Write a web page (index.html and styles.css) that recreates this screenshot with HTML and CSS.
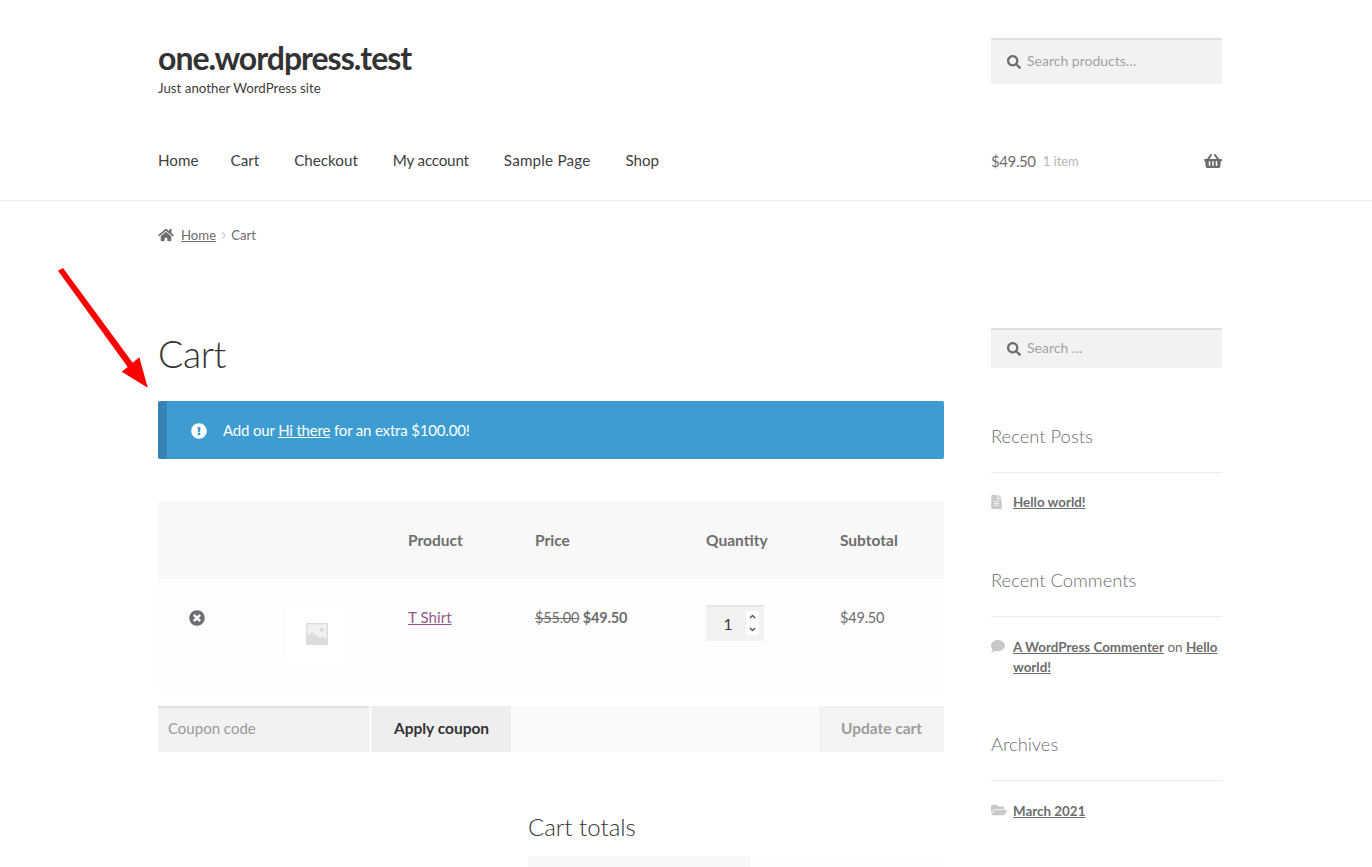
FILE: index.html
```html
<!DOCTYPE html>
<html lang="en">
<head>
<meta charset="utf-8">
<title>Cart – one.wordpress.test</title>
<link rel="stylesheet" href="styles.css">
</head>
<body>
<svg class="arrow" viewBox="0 0 90 120" width="90" height="120" aria-hidden="true"><path d="M0 2.800 L5 0 L74.700 94.700 L81.300 89.300 L89.800 119.800 L63.700 103.700 L69.700 99 Z" fill="#fe0000"/></svg>
<header class="site-header">
  <div class="wrap header-top">
    <div class="brand">
      <div class="site-title">one.wordpress.test</div>
      <div class="tagline">Just another WordPress site</div>
    </div>
    <form class="search header-search">
      <svg class="ico search-ico" viewBox="0 0 512 512"><path d="M505 442.700L405.300 343c-4.500-4.500-10.600-7-17-7H372c27.600-35.300 44-79.700 44-128C416 93.100 322.900 0 208 0S0 93.100 0 208s93.100 208 208 208c48.300 0 92.700-16.400 128-44v16.300c0 6.400 2.500 12.500 7 17l99.700 99.700c9.400 9.400 24.600 9.400 33.900 0l28.300-28.300c9.400-9.400 9.400-24.600.1-34zM208 336c-70.700 0-128-57.200-128-128 0-70.700 57.200-128 128-128 70.700 0 128 57.200 128 128 0 70.700-57.200 128-128 128z"/></svg>
      <input class="search-input" type="text" placeholder="Search products…">
    </form>
  </div>
  <div class="wrap header-nav">
    <nav class="menu">
      <a href="#">Home</a><a href="#">Cart</a><a href="#">Checkout</a><a href="#">My account</a><a href="#">Sample Page</a><a href="#">Shop</a>
    </nav>
    <div class="mini-cart">
      <span class="mini-amount">$49.50</span><span class="mini-count">1 item</span>
      <svg class="ico basket" viewBox="0 0 576 512"><path d="M576 216v16c0 13.255-10.745 24-24 24h-8l-26.113 182.788C514.509 462.435 494.257 480 470.370 480H105.630c-23.887 0-44.139-17.565-47.518-41.212L32 256h-8c-13.255 0-24-10.745-24-24v-16c0-13.255 10.745-24 24-24h67.341l106.780-146.821c10.395-14.292 30.407-17.453 44.701-7.058 14.293 10.395 17.453 30.408 7.058 44.701L170.477 192h235.046L326.120 82.821c-10.395-14.292-7.234-34.306 7.059-44.701 14.291-10.395 34.306-7.235 44.701 7.058L484.659 192H552c13.255 0 24 10.745 24 24zM312 392V280c0-13.255-10.745-24-24-24s-24 10.745-24 24v112c0 13.255 10.745 24 24 24s24-10.745 24-24zm112 0V280c0-13.255-10.745-24-24-24s-24 10.745-24 24v112c0 13.255 10.745 24 24 24s24-10.745 24-24zm-224 0V280c0-13.255-10.745-24-24-24s-24 10.745-24 24v112c0 13.255 10.745 24 24 24s24-10.745 24-24z"/></svg>
    </div>
  </div>
</header>

<div class="wrap breadcrumb">
  <svg class="ico home-ico" viewBox="0 0 576 512"><path d="M280.370 148.260L96 300.110V464a16 16 0 0 0 16 16l112.060-.29a16 16 0 0 0 15.920-16V368a16 16 0 0 1 16-16h64a16 16 0 0 1 16 16v95.640a16 16 0 0 0 16 16.050L464 480a16 16 0 0 0 16-16V300L295.670 148.260a12.190 12.190 0 0 0-15.300 0zM571.600 251.470L488 182.560V44.050a12 12 0 0 0-12-12h-56a12 12 0 0 0-12 12v72.610L318.470 43a48 48 0 0 0-61 0L4.340 251.470a12 12 0 0 0-1.600 16.900l25.500 31A12 12 0 0 0 45.150 301l235.220-193.740a12.190 12.190 0 0 1 15.300 0L530.900 301a12 12 0 0 0 16.900-1.600l25.500-31a12 12 0 0 0-1.700-16.930z"/></svg>
  <a href="#">Home</a>
  <svg class="crumb-sep" viewBox="0 0 6 10"><path d="M1 1l4 4-4 4" fill="none" stroke="#d6d6d6" stroke-width="1.800"/></svg>
  <span>Cart</span>
</div>

<div class="wrap columns">
  <main class="content">
    <h1 class="page-title">Cart</h1>
    <div class="notice">
      <svg class="ico notice-ico" viewBox="0 0 512 512"><path d="M504 256c0 136.997-111.043 248-248 248S8 392.997 8 256C8 119.083 119.043 8 256 8s248 111.083 248 248zm-248 50c-25.405 0-46 20.595-46 46s20.595 46 46 46 46-20.595 46-46-20.595-46-46-46zm-43.673-165.346l7.418 136c.347 6.364 5.609 11.346 11.982 11.346h48.546c6.373 0 11.635-4.982 11.982-11.346l7.418-136c.375-6.874-5.098-12.654-11.982-12.654h-63.383c-6.884 0-12.356 5.780-11.981 12.654z"/></svg>
      <span>Add our <a href="#">Hi there</a> for an extra $100.00!</span>
    </div>

    <table class="cart">
      <colgroup><col class="c-remove"><col class="c-thumb"><col class="c-name"><col class="c-price"><col class="c-qty"><col class="c-sub"></colgroup>
      <thead>
        <tr><th></th><th></th><th>Product</th><th>Price</th><th>Quantity</th><th>Subtotal</th></tr>
      </thead>
      <tbody>
        <tr>
          <td class="first"><svg class="ico remove-ico" viewBox="0 0 512 512"><path d="M256 8C119 8 8 119 8 256s111 248 248 248 248-111 248-248S393 8 256 8zm121.600 313.100c4.700 4.700 4.700 12.300 0 17L338 377.600c-4.700 4.700-12.300 4.700-17 0L256 312l-65.100 65.600c-4.700 4.700-12.300 4.700-17 0L134.400 338c-4.700-4.700-4.700-12.300 0-17l65.600-65-65.600-65.100c-4.700-4.700-4.700-12.300 0-17l39.600-39.600c4.700-4.700 12.300-4.700 17 0l65 65.700 65.100-65.600c4.700-4.700 12.300-4.700 17 0l39.600 39.600c4.700 4.700 4.700 12.300 0 17L312 256l65.600 65.100z"/></svg></td>
          <td>
            <div class="thumb"><svg viewBox="0 0 22 22" width="22" height="22"><rect width="22" height="22" fill="#dcdcde"/><path d="M1.500 1.500H20.500V16L16.700 13.300 14 15 5.700 8.700 1.500 13Z" fill="#f1f1f2"/><circle cx="15.700" cy="7" r="2.400" fill="#dcdcde"/></svg></div>
          </td>
          <td><a class="prod" href="#">T Shirt</a></td>
          <td class="money"><del>$55.00</del> <ins>$49.50</ins></td>
          <td>
            <div class="qty-box">
              <input class="qty" type="number" value="1" min="0" step="1">
              <span class="spin" aria-hidden="true">
                <svg viewBox="0 0 13 12" width="13" height="12"><rect width="13" height="12" rx="3" fill="#fff"/><path d="M4 7l2.500-2.500L9 7" fill="none" stroke="#555" stroke-width="1.400"/></svg>
                <svg viewBox="0 0 13 12" width="13" height="12"><rect width="13" height="12" rx="3" fill="#fff"/><path d="M4 5l2.500 2.500L9 5" fill="none" stroke="#555" stroke-width="1.400"/></svg>
              </span>
            </div>
          </td>
          <td class="money">$49.50</td>
        </tr>
      </tbody>
    </table>

    <div class="actions">
      <input class="coupon" type="text" placeholder="Coupon code">
      <button class="btn apply" type="button">Apply coupon</button>
      <button class="btn update" type="button">Update cart</button>
    </div>

    <section class="totals">
      <h2>Cart totals</h2>
      <div class="totals-table"><div class="tt-label"></div><div class="tt-value"></div></div>
    </section>
  </main>

  <aside class="sidebar">
    <form class="search side-search">
      <svg class="ico search-ico" viewBox="0 0 512 512"><path d="M505 442.700L405.300 343c-4.500-4.500-10.600-7-17-7H372c27.600-35.300 44-79.700 44-128C416 93.100 322.900 0 208 0S0 93.100 0 208s93.100 208 208 208c48.300 0 92.700-16.400 128-44v16.300c0 6.400 2.500 12.500 7 17l99.700 99.700c9.400 9.400 24.600 9.400 33.900 0l28.300-28.300c9.400-9.400 9.400-24.600.1-34zM208 336c-70.700 0-128-57.200-128-128 0-70.700 57.200-128 128-128 70.700 0 128 57.200 128 128 0 70.700-57.200 128-128 128z"/></svg>
      <input class="search-input" type="text" placeholder="Search …">
    </form>

    <section class="widget">
      <h3>Recent Posts</h3>
      <div class="item">
        <svg class="ico side-ico doc" viewBox="0 0 384 512"><path d="M224 136V0H24C10.700 0 0 10.700 0 24v464c0 13.300 10.700 24 24 24h336c13.300 0 24-10.700 24-24V160H248c-13.200 0-24-10.800-24-24zm64 236c0 6.600-5.400 12-12 12H108c-6.600 0-12-5.400-12-12v-8c0-6.600 5.400-12 12-12h168c6.600 0 12 5.400 12 12v8zm0-64c0 6.600-5.400 12-12 12H108c-6.600 0-12-5.400-12-12v-8c0-6.600 5.400-12 12-12h168c6.600 0 12 5.400 12 12v8zm0-72v8c0 6.600-5.400 12-12 12H108c-6.600 0-12-5.400-12-12v-8c0-6.600 5.400-12 12-12h168c6.600 0 12 5.400 12 12zm96-114.100v6.100H256V0h6.100c6.400 0 12.500 2.500 17 7l97.900 98c4.500 4.500 7 10.600 7 16.900z"/></svg>
        <p><a href="#">Hello world!</a></p>
      </div>
    </section>

    <section class="widget">
      <h3>Recent Comments</h3>
      <div class="item">
        <svg class="ico side-ico bubble" viewBox="0 0 512 512"><path d="M256 32C114.600 32 0 125.100 0 240c0 49.600 21.400 95 57 130.700C44.500 421.100 2.700 466 2.200 466.500c-2.200 2.300-2.800 5.700-1.500 8.700S4.800 480 8 480c66.300 0 116-31.800 140.600-51.400 32.700 12.300 69 19.400 107.400 19.400 141.400 0 256-93.100 256-208S397.400 32 256 32z"/></svg>
        <p><a href="#">A WordPress Commenter</a> on <a href="#">Hello world!</a></p>
      </div>
    </section>

    <section class="widget">
      <h3>Archives</h3>
      <div class="item">
        <svg class="ico side-ico folder" viewBox="0 0 576 512"><path d="M572.694 292.093L500.270 416.248A63.997 63.997 0 0 1 444.989 448H45.025c-18.523 0-30.064-20.093-20.731-36.093l72.424-124.155A64 64 0 0 1 152 256h399.964c18.523 0 30.064 20.093 20.730 36.093zM152 224h328v-48c0-26.510-21.490-48-48-48H272l-64-64H48C21.490 64 0 85.490 0 112v278.046l69.077-118.418C86.214 242.250 117.989 224 152 224z"/></svg>
        <p><a href="#">March 2021</a></p>
      </div>
    </section>
  </aside>
</div>
</body>
</html>
```
FILE: styles.css
```css
* { box-sizing: border-box; }
html, body { height: 867px; overflow: hidden; }
body {
  margin: 0;
  position: relative;
  background: #fff;
  color: #6d6d6d;
  font-family: Lato, "Liberation Sans", sans-serif;
  font-size: 16px;
  line-height: 24px;
}
a { color: inherit; }
.ico { display: block; fill: currentColor; flex: none; }
.wrap { width: 1064px; margin-left: 158px; }

.arrow { position: absolute; left: 58px; top: 268px; }

.site-header { height: 201px; border-bottom: 1px solid #eee; padding-top: 38px; }
.header-top { display: flex; justify-content: space-between; height: 60px; }
.site-title { font-size: 32px; line-height: 40px; font-weight: 700; letter-spacing: -1px; color: #333; }
.tagline { font-size: 13.3px; line-height: 20px; color: #404040; }

.search { display: flex; align-items: center; width: 231px; background: #f2f2f2; border-top: 2px solid #e0e0e0; box-shadow: inset 0 -1px 0 #f0f0f0; }
.header-search { height: 46px; padding-bottom: 1px; }
.side-search { height: 40px; padding-bottom: 1px; }
.search-ico { width: 14px; height: 14px; margin-left: 16px; color: #6d6d6d; }
.search-input { flex: 1; min-width: 0; border: 0; background: none; padding: 0 0 2px 6px; font: 14px/20px Lato, sans-serif; color: #404040; outline: 0; }
.search-input::placeholder { color: #a3a3a3; opacity: 1; }

.header-nav { display: flex; justify-content: space-between; align-items: center; height: 24px; margin-top: 50px; }
.menu { display: flex; gap: 35px; font-size: 15.2px; }
.menu a { color: #404040; text-decoration: none; }
.menu a:nth-child(1) { margin-right: -3px; }
.menu a:nth-child(4) { letter-spacing: -.2px; }
.menu a:nth-child(5) { letter-spacing: .2px; }
.mini-cart { display: flex; align-items: center; width: 231px; padding-top: 1px; }
.mini-amount { font-size: 15px; letter-spacing: -.4px; color: #6d6d6d; }
.mini-count { margin-left: 7px; font-size: 13px; color: #b5b5b5; }
.basket { width: 18px; height: 16px; margin-left: auto; color: #6d6d6d; }

.breadcrumb { display: flex; align-items: center; height: 20px; margin-top: 24px; margin-bottom: 83px; font-size: 13.2px; line-height: 20px; color: #6d6d6d; }
.home-ico { width: 16px; height: 14px; margin-right: 7px; }
.crumb-sep { width: 5px; height: 9px; margin: 0 5px 0 5px; }

.columns { display: flex; gap: 47px; align-items: flex-start; }
.content { width: 786px; flex: none; }
.sidebar { width: 231px; flex: none; }

.page-title { height: 52px; margin: 0 0 21px; font-size: 37.5px; line-height: 51px; font-weight: 300; color: #333; letter-spacing: -.4px; }

.notice { display: flex; align-items: center; height: 58px; padding-left: 24px; background: #3d9cd2; border-left: 9px solid #3582b3; border-radius: 2px; color: #fff; font-size: 15px; letter-spacing: -.17px; }
.notice a { color: #fff; }
.notice-ico { width: 16px; height: 16px; margin: 1px 16px 0 0; }

.cart { width: 100%; margin-top: 42px; border-collapse: collapse; table-layout: fixed; }
.c-remove { width: 99px; }
.c-thumb { width: 121px; }
.c-name { width: 127px; }
.c-price { width: 171px; }
.c-qty { width: 134px; }
.c-sub { width: 134px; }
.cart th { height: 78px; padding: 0 0 0 30px; background: #f8f8f8; text-align: left; font-weight: 700; font-size: 15.5px; color: #6d6d6d; }
.cart td { height: 110px; padding: 26px 0 0 30px; vertical-align: top; background: #fdfdfd; font-size: 14.5px; letter-spacing: -.2px; }
.cart td.first { padding-left: 31px; }
.cart td.money { padding-top: 27px; }
.prod { font-size: 15.2px; letter-spacing: 0; color: #96588a; }
.remove-ico { width: 16px; height: 16px; margin-top: 5px; color: #6b6d76; }
.thumb { display: flex; align-items: center; justify-content: center; width: 60px; height: 60px; margin-top: -1px; background: #fff; border-radius: 4px; }
del { text-decoration: line-through; }
ins { text-decoration: none; font-weight: 700; }

.qty-box { position: relative; width: 58px; height: 36px; }
.qty { display: block; width: 58px; height: 36px; border: 0; border-top: 2px solid #e6e6e6; background: #f2f2f2; padding: 0 14px 2px 0; text-align: center; font: 16px Lato, sans-serif; color: #404040; outline: 0; -moz-appearance: textfield; }
.qty::-webkit-inner-spin-button { -webkit-appearance: none; margin: 0; }
.spin { position: absolute; left: 40px; top: 6px; display: flex; flex-direction: column; }
.spin svg { display: block; }

.actions { display: flex; height: 46px; margin-top: 17px; background: #fafafa; }
.coupon { width: 211px; height: 46px; border: 0; border-top: 2px solid #e0e0e0; background: #f2f2f2; padding: 0 10px 4px; font: 15px Lato, sans-serif; outline: 0; }
.coupon::placeholder { color: #9a9a9a; opacity: 1; }
.btn { height: 46px; border: 0; padding: 0 0 2px; font: 700 15.5px Lato, sans-serif; }
.apply { width: 139px; margin-left: 3px; background: #eee; color: #333; }
.update { width: 125px; margin-left: auto; background: #f3f3f3; color: #9d9d9d; }

.totals { margin: 59px 0 0 370px; }
.totals h2 { height: 32px; margin: 0 0 13px; font-size: 24px; line-height: 31px; font-weight: 300; color: #333; }
.totals-table { display: grid; grid-template-columns: 222px 194px; height: 48px; }
.tt-label { background: #f8f8f8; }
.tt-value { background: #fdfdfd; }

.widget { margin-top: 54px; }
.widget h3 { margin: 0 0 19px; padding-bottom: 22px; border-bottom: 1px solid #eee; font-size: 18.4px; line-height: 28px; font-weight: 300; color: #6d6d6d; }
.widget + .widget h3 { margin-bottom: 20px; }
.widget:last-child { margin-top: 53px; }
.item { position: relative; padding-left: 22px; font-size: 13.4px; line-height: 20px; }
.item p { margin: 0; }
.item a { font-weight: 700; }
.side-ico { position: absolute; left: 0; color: #c9c9c9; }
.doc { top: 3px; width: 11px; height: 14px; }
.bubble { top: 2px; width: 14px; height: 14px; }
.folder { top: 2px; width: 16px; height: 14px; }
```
